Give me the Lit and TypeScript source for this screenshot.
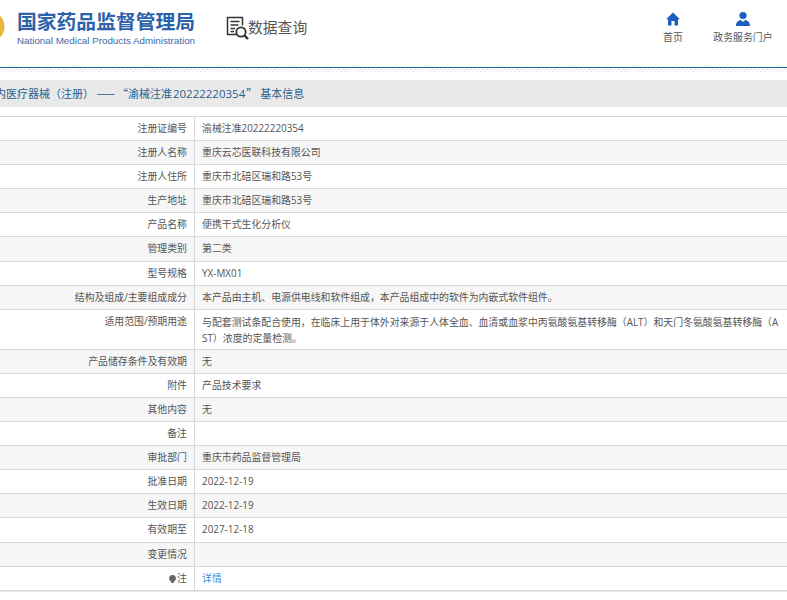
import { LitElement, html, css } from "lit";
import { customElement } from "lit/decorators.js";

type Row = [string, string];
const ROWS: Row[] = [
  ["注册证编号", "渝械注准20222220354"],
  ["注册人名称", "重庆云芯医联科技有限公司"],
  ["注册人住所", "重庆市北碚区瑞和路53号"],
  ["生产地址", "重庆市北碚区瑞和路53号"],
  ["产品名称", "便携干式生化分析仪"],
  ["管理类别", "第二类"],
  ["型号规格", "YX-MX01"],
  ["结构及组成/主要组成成分", "本产品由主机、电源供电线和软件组成，本产品组成中的软件为内嵌式软件组件。"],
  ["适用范围/预期用途", "与配套测试条配合使用，在临床上用于体外对来源于人体全血、血清或血浆中丙氨酸氨基转移酶（ALT）和天门冬氨酸氨基转移酶（AST）浓度的定量检测。"],
  ["产品储存条件及有效期", "无"],
  ["附件", "产品技术要求"],
  ["其他内容", "无"],
  ["备注", ""],
  ["审批部门", "重庆市药品监督管理局"],
  ["批准日期", "2022-12-19"],
  ["生效日期", "2022-12-19"],
  ["有效期至", "2027-12-18"],
  ["变更情况", ""],
];

const withParens = (text: string) =>
  text.split(/([（）])/).map((part) =>
    part === "（" || part === "）" ? html`<span class="paren">${part}</span>` : part
  );

@customElement("app-root")
export class AppRoot extends LitElement {
  static styles = css`
    :host { display: block; width: 787px; height: 600px; overflow: hidden; background: #fff;
      font-family: "Open Sans", "Noto Sans CJK SC", sans-serif; color: #555; text-spacing-trim: space-all; }
    .header { display: flex; align-items: flex-start; height: 67px; }
    .emblem { flex: none; margin: 10px 0 0 -28px; width: 33px; height: 33px; }
    .brand { margin: 9px 0 0 12px; width: 182px; font-family: "Liberation Sans", "Noto Sans CJK SC", sans-serif; }
    .brand-cn { font-size: 19.8px; line-height: 27px; font-weight: 700; color: #2c62aa; white-space: nowrap; }
    .brand-en { font-size: 9.8px; line-height: 11px; margin-top: -1px; color: #3b6aa8; white-space: nowrap; }
    .query { display: flex; align-items: center; margin: 14px 0 0 27px; }
    .query svg { width: 24px; height: 26px; }
    .query span { font-size: 14.8px; line-height: 26px; color: #555; margin: 0 0 2px -2px; white-space: nowrap; }
    .nav { margin-left: auto; display: flex; margin-top: 11px; }
    .nav-item { display: flex; flex-direction: column; align-items: center; font-size: 9.9px; line-height: 14px; color: #555; }
    .nav-item svg { width: 16px; height: 16px; margin-bottom: 3px; }
    .nav-home { width: 22px; margin-right: 29px; }
    .nav-gov { width: 60px; margin-right: 14px; }
    .rule { height: 1px; background: #1a6a9e; }
    .hatch { height: 4px; background: repeating-linear-gradient(135deg, #ececec 0 1px, #fff 1px 3px); }
    .gap { height: 8px; }
    .crumb { background: #e9e9e9; height: 27px; line-height: 27px; font-size: 11px; color: #2a5f8f; white-space: nowrap;
      font-family: "Noto Sans CJK SC", sans-serif; text-indent: -16px; overflow: hidden; }
    .dash { letter-spacing: 2px; }
    .num { font-family: "Open Sans", sans-serif; font-size: 11.5px; margin: 0 1px; }
    .tail { margin-left: 3px; }
    .paren { font-family: "Noto Sans CJK TC", sans-serif; }
    .table { margin-top: 9px; margin-left: -19px; border-top: 1px solid #d8d8d8; border-bottom: 1px solid #e6e6e6; }
    .row { display: grid; grid-template-columns: 214px 1fr; box-sizing: border-box; min-height: 24.1px;
      border-bottom: 1px solid #d8d8d8; background: #fff; font-size: 9.9px; line-height: 14px; }
    .row.alt { background: #f6f6f6; }
    .label { text-align: right; padding: 4px 7px 4px 0; border-right: 1px solid #d8d8d8; white-space: nowrap; }
    .value { padding: 4px 8px 4px 7px; word-break: break-all; }
    .value.tall { line-height: 16px; padding-bottom: 3px; }
    .link { color: #3f8ae0; }
    .bulb { width: 7px; height: 8px; margin-right: 1px; vertical-align: -1px; }
  `;

  render() {
    return html`
      <div class="header">
        <svg class="emblem" viewBox="0 0 33 33">
          <circle cx="16.5" cy="16.5" r="16" fill="#e8b63a"/>
          <circle cx="16.5" cy="16.5" r="11" fill="#f4d36a"/>
          <circle cx="16.5" cy="16.5" r="6" fill="#c9443a"/>
        </svg>
        <div class="brand">
          <div class="brand-cn">国家药品监督管理局</div>
          <div class="brand-en">National Medical Products Administration</div>
        </div>
        <div class="query">
          <svg viewBox="0 0 24 26" fill="none" stroke="#333" stroke-width="1.5">
            <path d="M11 19.5H1.5V2.5h15v8"/>
            <path d="M4.5 6.5h9M4.5 10h8M4.5 13.5h4.5M4.5 16.5h3.5"/>
            <circle cx="15" cy="17" r="4.7" stroke-width="1.8"/>
            <path d="M18.5 20.5l3.5 3.5" stroke-width="2.4"/>
          </svg>
          <span>数据查询</span>
        </div>
        <div class="nav">
          <div class="nav-item nav-home">
            <svg viewBox="0 0 16 16" fill="#1c5fc0"><path d="M8 1.5L1 8.2h2v6.3h3.5V10h3v4.5H13V8.2h2z"/></svg>
            首页
          </div>
          <div class="nav-item nav-gov">
            <svg viewBox="0 0 16 16" fill="#1c5fc0"><circle cx="8" cy="4.5" r="3.6"/><path d="M1 15c0-3.6 2.4-5.6 4.8-6l2.2 2 2.2-2c2.4.4 4.8 2.4 4.8 6z"/></svg>
            政务服务门户
          </div>
        </div>
      </div>
      <div class="rule"></div>
      <div class="hatch"></div>
      <div class="gap"></div>
      <div class="crumb">境内医疗器械${withParens("（注册）")} <span class="dash">——</span>“渝械注准<span class="num">20222220354</span>”<span class="tail">基本信息</span></div>
      <div class="table">
        ${ROWS.map(([k, v], i) => html`
          <div class="row ${i % 2 ? "alt" : ""}">
            <div class="label">${k}</div>
            <div class="value ${v.length > 60 ? "tall" : ""}">${withParens(v)}</div>
          </div>`)}
        <div class="row">
          <div class="label"><svg class="bulb" viewBox="0 0 7 8"><path d="M3.5 0a3.3 3.3 0 0 1 2 6L4.5 8h-2l-1-2a3.3 3.3 0 0 1 2-6z" fill="#666"/></svg>注</div>
          <div class="value"><span class="link">详情</span></div>
        </div>
      </div>
    `;
  }
}
